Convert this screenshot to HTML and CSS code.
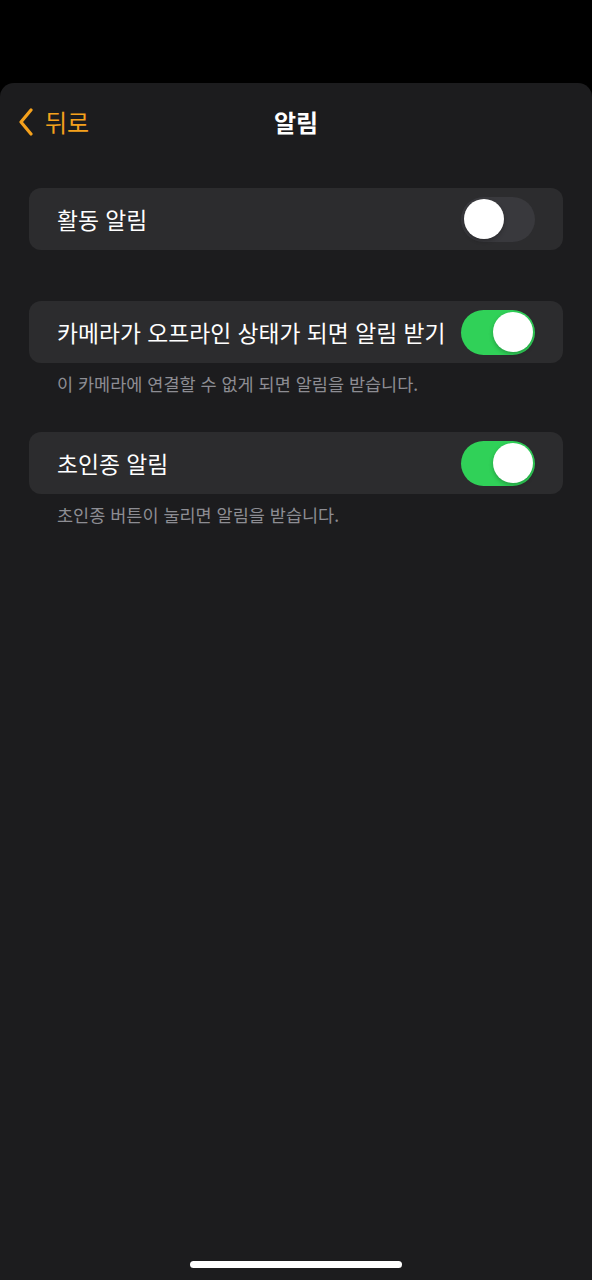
FILE: index.html
```html
<!DOCTYPE html>
<html lang="ko">
<head>
<meta charset="utf-8">
<link rel="stylesheet" href="styles.css">
</head>
<body>
<div class="screen">
  <div class="sheet">
    <header class="nav">
      <div class="back">
        <svg class="chev" width="15" height="28" viewBox="0 0 15 28"><path d="M13 2 L3 14 L13 26" fill="none" stroke="#f5a11c" stroke-width="3.2" stroke-linecap="round" stroke-linejoin="round"/></svg>
        <span class="back-text">뒤로</span>
      </div>
      <h1 class="title">알림</h1>
    </header>

    <section class="group first">
      <div class="cell">
        <span class="label">활동 알림</span>
        <span class="toggle off"><span class="knob"></span></span>
      </div>
    </section>

    <section class="group second">
      <div class="cell">
        <span class="label">카메라가 오프라인 상태가 되면 알림 받기</span>
        <span class="toggle on"><span class="knob"></span></span>
      </div>
      <p class="footer">이 카메라에 연결할 수 없게 되면 알림을 받습니다.</p>
    </section>

    <section class="group third">
      <div class="cell">
        <span class="label">초인종 알림</span>
        <span class="toggle on"><span class="knob"></span></span>
      </div>
      <p class="footer">초인종 버튼이 눌리면 알림을 받습니다.</p>
    </section>

    <div class="spacer"></div>
    <div class="home"></div>
  </div>
</div>
</body>
</html>
```

FILE: styles.css
```css
* { box-sizing: border-box; margin: 0; padding: 0; }
html, body { background: #000; }
body {
  width: 592px;
  height: 1280px;
  font-family: "Noto Sans CJK KR", "Noto Sans", sans-serif;
  color: #fff;
  overflow: hidden;
}
.screen {
  height: 1280px;
  padding-top: 83px;
  display: flex;
  flex-direction: column;
}
.sheet {
  flex: 1;
  background: #1c1c1e;
  border-radius: 14px 14px 0 0;
  display: flex;
  flex-direction: column;
  padding: 0 29px;
}
.nav {
  position: relative;
  height: 78px;
  display: flex;
  align-items: center;
  justify-content: center;
}
.back {
  position: absolute;
  left: -11px;
  top: 25px;
  display: flex;
  align-items: center;
  gap: 12px;
}
.back-text {
  font-size: 24px;
  color: #f5a11c;
  line-height: 26px;
}
.title {
  font-size: 24px;
  font-weight: 700;
  line-height: 26px;
}
.group { display: flex; flex-direction: column; }
.group.first { margin-top: 27px; }
.group.second { margin-top: 51px; }
.group.third { margin-top: 35px; }
.cell {
  height: 62px;
  background: #2c2c2e;
  border-radius: 12px;
  display: flex;
  align-items: center;
  justify-content: space-between;
  padding: 0 28px;
}
.label {
  font-size: 22.8px;
  color: #fff;
}
.toggle {
  width: 74px;
  height: 45px;
  border-radius: 23px;
  padding: 2.5px;
  display: flex;
}
.toggle.off { background: #39393d; justify-content: flex-start; }
.toggle.on { background: #30d158; justify-content: flex-end; }
.knob {
  width: 40px;
  height: 40px;
  border-radius: 50%;
  background: #fff;
  box-shadow: 0 2px 4px rgba(0,0,0,0.25);
}
.footer {
  font-size: 17.5px;
  color: #8d8d93;
  padding: 8px 28px 0;
  line-height: 26px;
}
.spacer { flex: 1; }
.home {
  align-self: center;
  width: 212px;
  height: 7px;
  border-radius: 4px;
  background: #fff;
  margin-bottom: 12px;
}
```
